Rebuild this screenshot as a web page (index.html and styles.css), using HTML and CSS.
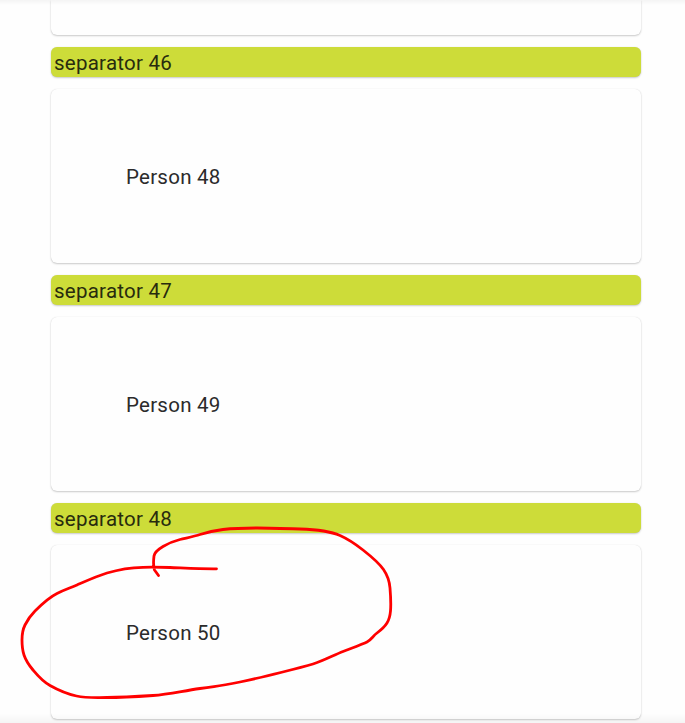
FILE: index.html
```
<!DOCTYPE html>
<html lang="en">
<head>
<meta charset="utf-8">
<title>People</title>
<link rel="stylesheet" href="styles.css">
</head>
<body>
<main class="list">
  <div class="card card-cut"></div>
  <div class="card separator">separator 46</div>
  <div class="card person">Person 48</div>
  <div class="card separator">separator 47</div>
  <div class="card person">Person 49</div>
  <div class="card separator">separator 48</div>
  <div class="card person">Person 50</div>
</main>
<div class="edge edge-top"></div>
<div class="edge edge-bottom"></div>
<svg class="markup" width="685" height="723" viewBox="0 0 685 723" aria-hidden="true">
  <path d="M158.500 575.500 L154.500 570 C153.500 567 153.500 560 154 556 C154.500 552 158 549.500 163 546.500 C168 543.500 174 541 180 539.500 S194 536.500 200 534.500 S214 530.500 223 529.500 S245 528 257 528 S285 528.500 300 529 S332 532 340 535.500 S356 544.500 363 550 S379 563 383.500 569.500 S389.500 582 390 588 S391 605 390.500 611 S389.500 619 387 623 S381 630 377 633 S371 640 367 642 S352 648 343 651.500 S323 661 313 664 S264 677 240 682 S220 685.500 200 688.500 S168 694.500 153 695.500 S122 697.500 107 697.500 S86 698 76.500 696 S58 690 50 685.500 S38 676 33 670 S26 661 24 655 S22 646 22 640 S22.500 630 25 625 S30 616 35 611 S49 597.500 57 593.500 S69 588.500 77 585 S97 576 107 573 S133 567.500 143 567.300 S160 567.200 170 567.500 S200 569 216.500 568.800"/>
</svg>
</body>
</html>
```
FILE: styles.css
```
body {
  margin: 0;
  height: 723px;
  overflow: hidden;
  position: relative;
  background: #fefefe;
  color: #2b2b2b;
  font: 400 20.5px/30px Roboto, "Liberation Sans", sans-serif;
  letter-spacing: 0.25px;
}

.list {
  display: flex;
  flex-direction: column;
  gap: 12px;
  width: 590px;
  margin-left: 51px;
}

.card {
  box-sizing: border-box;
  flex: none;
  border-radius: 6px;
  background: #fefefe;
  box-shadow: 0 1px 2px rgba(0, 0, 0, 0.2), 0 0 1px rgba(0, 0, 0, 0.12);
}

.card-cut {
  height: 35px;
  border-radius: 0 0 6px 6px;
}

.separator {
  height: 30px;
  padding: 1px 3px 0;
  background: #cddc39;
  color: #282b0e;
}

.person {
  display: flex;
  align-items: center;
  height: 174px;
  padding: 2px 75px 0;
}

.edge {
  position: absolute;
  left: 0;
  width: 100%;
  height: 5px;
}

.edge-top {
  top: 0;
  background: linear-gradient(rgba(0, 0, 0, 0.04), transparent);
}

.edge-bottom {
  bottom: 0;
  height: 10px;
  background: linear-gradient(transparent, rgba(0, 0, 0, 0.04));
}

.markup {
  position: absolute;
  top: 0;
  left: 0;
  fill: none;
  stroke: #f00;
  stroke-width: 2.8;
  stroke-linecap: round;
  stroke-linejoin: round;
}
```
